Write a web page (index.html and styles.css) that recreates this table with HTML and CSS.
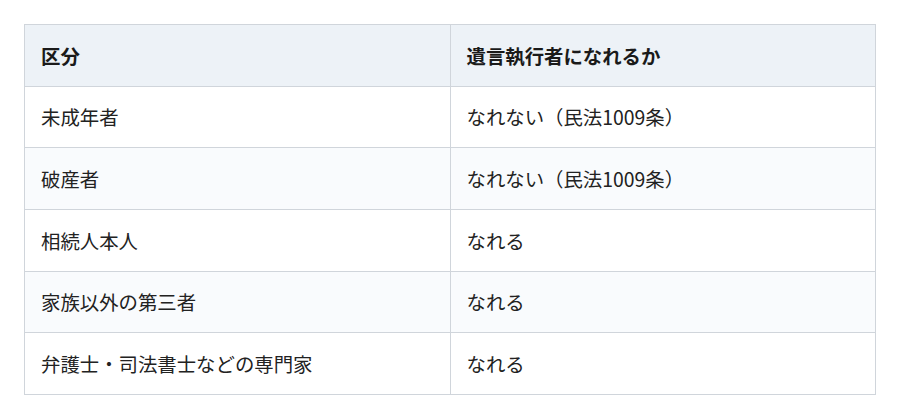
FILE: index.html
```html
<!DOCTYPE html>
<html lang="ja">
<head>
<meta charset="utf-8">
<link rel="stylesheet" href="styles.css">
</head>
<body>
<table class="tbl">
  <thead>
    <tr><th>区分</th><th>遺言執行者になれるか</th></tr>
  </thead>
  <tbody>
    <tr><td>未成年者</td><td>なれない（民法1009条）</td></tr>
    <tr><td>破産者</td><td>なれない（民法1009条）</td></tr>
    <tr><td>相続人本人</td><td>なれる</td></tr>
    <tr><td>家族以外の第三者</td><td>なれる</td></tr>
    <tr><td>弁護士・司法書士などの専門家</td><td>なれる</td></tr>
  </tbody>
</table>
</body>
</html>
```
FILE: styles.css
```css
html, body {
  margin: 0;
  padding: 0;
  background: #ffffff;
}
body {
  padding: 24px 24px 0 24px;
  font-family: "Noto Sans CJK JP", "Noto Sans", sans-serif;
  color: #222;
}
.tbl {
  width: 852px;
  border-collapse: collapse;
  table-layout: fixed;
  font-size: 19.4px;
}
.tbl th, .tbl td {
  border: 1.5px solid #d0d5db;
  padding: 0 16px;
  height: 60.7px;
  text-align: left;
  vertical-align: middle;
  line-height: 1.3;
}
.tbl th {
  background: #edf2f7;
  font-weight: 700;
  color: #1a1a1a;
}
.tbl td { font-weight: 400; }
.tbl tbody tr:nth-child(even) td {
  background: #f9fbfd;
}
```
